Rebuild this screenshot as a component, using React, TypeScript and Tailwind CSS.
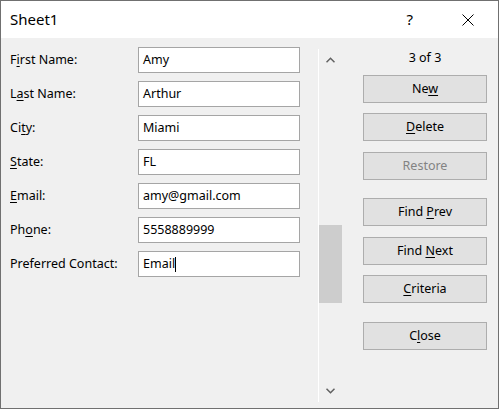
import React from 'react'

const font = { fontFamily: '"Noto Sans", "Segoe UI", Arial, sans-serif' }

interface Field {
  label: React.ReactNode
  value: string
  caret?: boolean
}

const U = ({ children }: { children: React.ReactNode }) => (
  <span className="underline underline-offset-[2px] decoration-[1px]">{children}</span>
)

const fields: Field[] = [
  { label: <>F<U>i</U>rst Name:</>, value: 'Amy' },
  { label: <>L<U>a</U>st Name:</>, value: 'Arthur' },
  { label: <>Ci<U>t</U>y:</>, value: 'Miami' },
  { label: <><U>S</U>tate:</>, value: 'FL' },
  { label: <><U>E</U>mail:</>, value: 'amy@gmail.com' },
  { label: <>Ph<U>o</U>ne:</>, value: '5558889999' },
  { label: <>Preferred Contact:</>, value: 'Email', caret: true },
]

function Button({
  children,
  disabled,
  className = '',
}: {
  children: React.ReactNode
  disabled?: boolean
  className?: string
}) {
  return (
    <div
      className={`h-[28px] w-[124px] flex items-center justify-center border border-[#adadad] bg-[#e1e1e1] text-[12.5px] ${
        disabled ? 'text-[#838383]' : 'text-black'
      } ${className}`}
    >
      <span>{children}</span>
    </div>
  )
}

function Chevron({ down }: { down?: boolean }) {
  return (
    <svg width="9" height="6" viewBox="0 0 9 6" className="mx-auto">
      <polyline
        points={down ? '0.5,0.8 4.5,4.8 8.5,0.8' : '0.5,5.2 4.5,1.2 8.5,5.2'}
        fill="none"
        stroke="#606060"
        strokeWidth="1.5"
      />
    </svg>
  )
}

export default function App() {
  return (
    <div
      className="w-[499px] h-[409px] border border-[#707070] bg-[#f0f0f0] flex flex-col text-black"
      style={font}
    >
      {/* title bar */}
      <div className="h-[37px] bg-white flex items-center shrink-0">
        <span className="pl-[9px] text-[15px] leading-none">Sheet1</span>
        <span className="ml-auto text-[15px] leading-none mr-[49px]">?</span>
        <svg width="12" height="12" viewBox="0 0 12 12" className="mr-[24px]">
          <path d="M0.5 0.5 L11.5 11.5 M11.5 0.5 L0.5 11.5" stroke="#000" strokeWidth="1" />
        </svg>
      </div>

      {/* body */}
      <div className="flex flex-1">
        <div className="w-[317px] pt-[9px] flex flex-col gap-[8px]">
          {fields.map((f, i) => (
            <div key={i} className="h-[26px] flex items-center text-[12.5px]">
              <span className="w-[137px] shrink-0 pl-[9px]">{f.label}</span>
              <div className="w-[162px] h-[26px] border border-[#a5a5a5] bg-white flex items-center pl-[4px]">
                {f.value}
                {f.caret && <span className="inline-block w-px h-[15px] bg-black" />}
              </div>
            </div>
          ))}
        </div>

        <div className="w-px bg-white mt-[11px] mb-[6px]" />

        <div className="w-[23px] flex flex-col pt-[19px] pb-[14px]">
          <Chevron />
          <div className="mt-[162px] h-[78px] bg-[#cdcdcd]" />
          <div className="mt-auto">
            <Chevron down />
          </div>
        </div>

        <div className="pl-[21px] flex flex-col">
          <div className="h-[37px] flex items-center justify-center text-[12.5px] w-[124px] pt-[4px]">
            3 of 3
          </div>
          <Button>
            Ne<U>w</U>
          </Button>
          <Button className="mt-[10px]">
            <U>D</U>elete
          </Button>
          <Button disabled className="mt-[11px]">
            Restore
          </Button>
          <Button className="mt-[18px]">
            Find <U>P</U>rev
          </Button>
          <Button className="mt-[11px]">
            Find <U>N</U>ext
          </Button>
          <Button className="mt-[10px]">
            <U>C</U>riteria
          </Button>
          <Button className="mt-[19px]">
            C<U>l</U>ose
          </Button>
        </div>
      </div>
    </div>
  )
}
